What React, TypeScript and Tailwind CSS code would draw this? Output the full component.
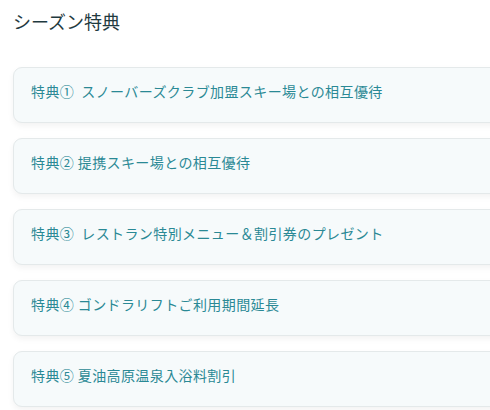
const perks = [
    "特典①  スノーバーズクラブ加盟スキー場との相互優待",
    "特典② 提携スキー場との相互優待",
    "特典③  レストラン特別メニュー＆割引券のプレゼント",
    "特典④ ゴンドラリフトご利用期間延長",
    "特典⑤ 夏油高原温泉入浴料割引",
];

const App = () => {
    return (
        <div
            className="h-[410px] w-[490px] overflow-hidden bg-white pl-[13px] pt-[7px]"
            style={{ fontFamily: '"Noto Sans CJK JP", "Noto Sans", sans-serif' }}
        >
            <h2 className="text-[18px] leading-[28px] text-[#1f3a3f]">
                シーズン特典
            </h2>
            <div className="mt-[32px] flex flex-col gap-[15px]">
                {perks.map((perk) => (
                    <div
                        key={perk}
                        className="h-[56px] w-[520px] whitespace-pre rounded-[9px] border border-[#e4e9ea] bg-[#f6fafb] pl-[17px] pt-[13px] text-[14px] leading-[20px] tracking-[0.4px] text-[#2a8995] shadow-[0_3px_6px_rgba(0,0,0,0.05)]"
                    >
                        {perk}
                    </div>
                ))}
            </div>
        </div>
    );
};

export default App;
